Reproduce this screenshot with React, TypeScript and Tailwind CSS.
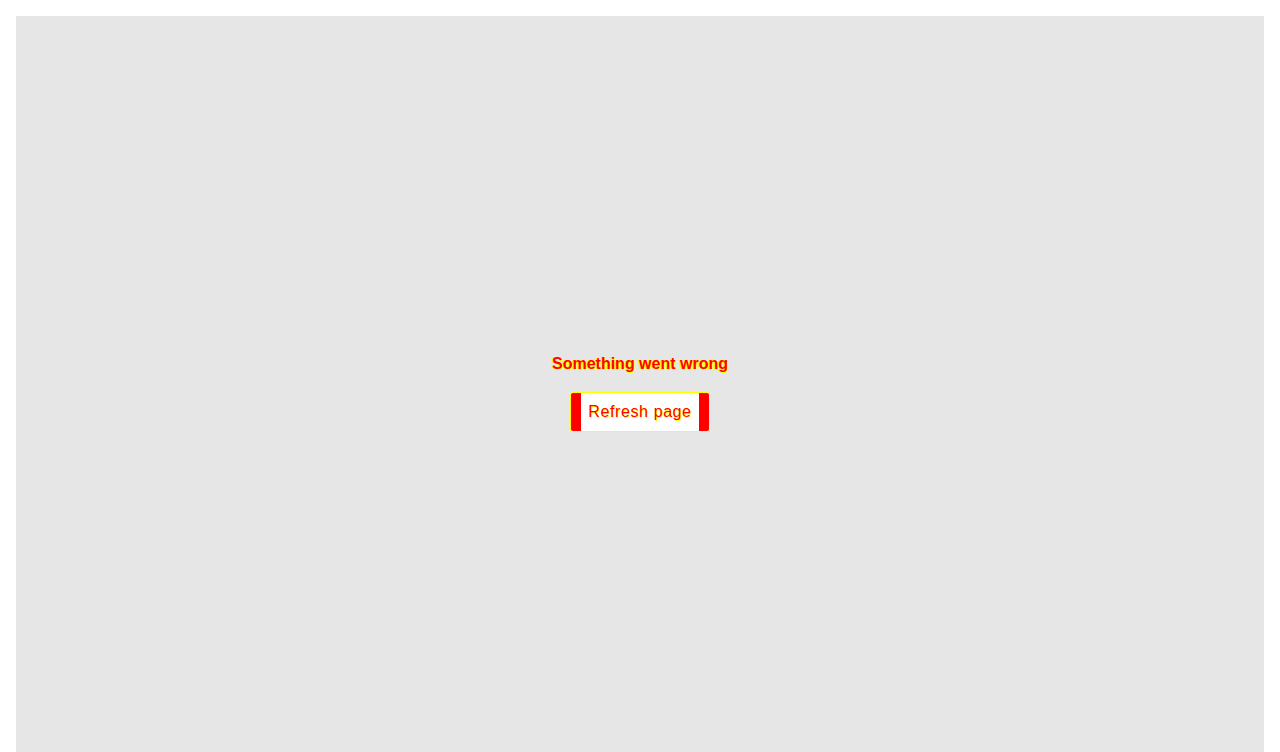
export default function App() {
  return (
    <div className="min-h-screen bg-white p-4 pb-0 font-['Liberation_Sans',Arial,sans-serif]">
      <div className="flex h-screen flex-col items-center justify-center gap-4 bg-[#e6e6e6]">
        <p className="text-[16px] font-bold text-[#ff0000] [text-shadow:1px_1px_0_#ffff00,-1px_0_0_#ffff00]">
          Something went wrong
        </p>
        <button className="flex h-[40px] w-[140px] items-center justify-center rounded-[3px] border border-[#ffff00] bg-white">
          <span className="h-full w-[10px] shrink-0 rounded-l-[2px] bg-[#ff0000]" />
          <span className="flex-1 text-center text-[16px] tracking-[0.6px] text-[#ff0000] [text-shadow:1px_1px_0_#ffff00]">
            Refresh page
          </span>
          <span className="h-full w-[10px] shrink-0 rounded-r-[2px] bg-[#ff0000]" />
        </button>
      </div>
    </div>
  );
}
